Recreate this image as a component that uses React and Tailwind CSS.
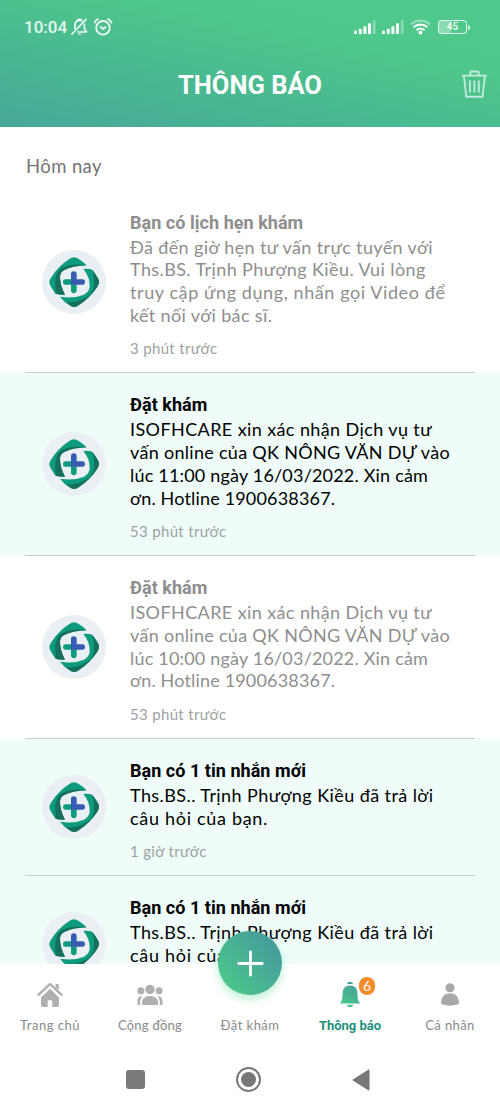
import React, { useState } from 'react';

const notifications = [
    {
        id: 1,
        title: 'Bạn có lịch hẹn khám',
        lines: [
            { text: 'Đã đến giờ hẹn tư vấn trực tuyến với', className: 'tracking-[0.37px]' },
            { text: 'Ths.BS. Trịnh Phượng Kiều. Vui lòng', className: 'tracking-[0.4px]' },
            { text: 'truy cập ứng dụng, nhấn gọi Video để', className: 'tracking-[0.59px]' },
            { text: 'kết nối với bác sĩ.', className: 'tracking-[0.36px]' },
        ],
        time: '3 phút trước',
        read: true,
    },
    {
        id: 2,
        title: 'Đặt khám',
        lines: [
            { text: 'ISOFHCARE xin xác nhận Dịch vụ tư', className: 'tracking-[0.4px]' },
            { text: 'vấn online của QK NÔNG VĂN DỰ vào', className: 'tracking-[0.3px]' },
            { text: 'lúc 11:00 ngày 16/03/2022. Xin cảm', className: 'tracking-[0.19px]' },
            { text: 'ơn. Hotline 1900638367.', className: 'tracking-[0.17px]' },
        ],
        time: '53 phút trước',
        read: false,
    },
    {
        id: 3,
        title: 'Đặt khám',
        lines: [
            { text: 'ISOFHCARE xin xác nhận Dịch vụ tư', className: 'tracking-[0.4px]' },
            { text: 'vấn online của QK NÔNG VĂN DỰ vào', className: 'tracking-[0.3px]' },
            { text: 'lúc 10:00 ngày 16/03/2022. Xin cảm', className: 'tracking-[0.19px]' },
            { text: 'ơn. Hotline 1900638367.', className: 'tracking-[0.17px]' },
        ],
        time: '53 phút trước',
        read: true,
    },
    {
        id: 4,
        title: 'Bạn có 1 tin nhắn mới',
        lines: [
            { text: 'Ths.BS.. Trịnh Phượng Kiều đã trả lời', className: 'tracking-[0.42px]' },
            { text: 'câu hỏi của bạn.', className: 'tracking-[0.7px]' },
        ],
        time: '1 giờ trước',
        read: false,
    },
    {
        id: 5,
        title: 'Bạn có 1 tin nhắn mới',
        lines: [
            { text: 'Ths.BS.. Trịnh Phượng Kiều đã trả lời', className: 'tracking-[0.42px]' },
            { text: 'câu hỏi của bạn.', className: 'tracking-[0.7px]' },
        ],
        time: '',
        read: false,
    },
];

const SignalIcon = () => (
    <svg width="22" height="14" viewBox="0 0 22 14" fill="#fff" fillOpacity="0.95">
        <rect x="0" y="10.6" width="3" height="3.4" rx="1" />
        <rect x="4.8" y="8.7" width="3" height="5.3" rx="0.6" />
        <rect x="9.4" y="6.3" width="3" height="7.7" rx="0.6" />
        <rect x="14" y="3.2" width="3" height="10.8" rx="0.6" />
        <rect x="18.8" y="0.2" width="2.8" height="13.8" rx="0.6" fillOpacity="0.35" />
    </svg>
);

const StatusBar = () => (
    <div className="flex h-[54px] items-center pl-[24px] pr-[30px]">
        <span className="w-[46px] whitespace-nowrap text-[17px] font-medium leading-none text-white/85">10:04</span>
        <svg className="ml-[1px]" width="18" height="18" viewBox="0 0 18 18" fill="none" stroke="#fff" strokeOpacity="0.9" strokeWidth="1.7">
            <path d="M3.5 11.2 4 10V7c0-2.6 1.8-4.5 4.7-4.8 1 0 1.900.3 2.700.8M13.400 5.600V10.300l2 3.700H6.300" strokeLinejoin="round" />
            <path d="M7.200 1.300h2.900M1 16 15 1.300" strokeLinecap="round" />
            <path d="M6.400 15.700a2.500 2 0 0 0 4.500 0z" fill="#fff" stroke="none" />
        </svg>
        <svg className="ml-[4px]" width="20" height="18" viewBox="0 0 20 18" fill="none" stroke="#fff" strokeOpacity="0.9" strokeWidth="1.8" strokeLinecap="round">
            <circle cx="10" cy="9.8" r="6.8" />
            <path d="M1.600 4.600C2.200 3 3.400 1.800 5 1.200M18.400 4.600C17.800 3 16.600 1.800 15 1.200M7.600 8.800l2.400 2.200 2.700-2" />
        </svg>
        <div className="ml-auto flex items-center">
            <SignalIcon />
            <span className="w-[6px]" />
            <SignalIcon />
            <svg className="ml-[6px]" width="21" height="16" viewBox="0 0 21 16" fill="none" stroke="#fff" strokeOpacity="0.95" strokeWidth="2.2">
                <path d="M0.900 5.400C6.200 0.300 14.800 0.300 20.100 5.400" strokeOpacity="0.4" />
                <path d="M3.500 8.300C7.400 4.700 13.600 4.700 17.500 8.300M6.500 11.200c2.300-2.100 5.700-2.100 8 0" />
                <circle cx="10.5" cy="13.6" r="2" fill="#fff" stroke="none" />
            </svg>
            <div className="ml-[7px] flex h-[14px] w-[29px] items-center justify-center rounded-[4px] border-[1.5px] border-white/80 bg-linear-to-r from-white/35 from-45% to-transparent to-45% text-[10px] font-medium leading-none text-white">
                45
            </div>
            <div className="ml-px h-[5px] w-[2px] rounded-r bg-white/80" />
        </div>
    </div>
);

const Header = ({ onClear }) => (
    <header className="h-[127px] shrink-0 bg-[linear-gradient(12deg,#46a898_0%,#4dc78b_68%,#4fc98c_100%)] font-[Roboto,sans-serif]">
        <StatusBar />
        <div className="grid h-[62px] grid-cols-[60px_1fr_60px] items-center">
            <span />
            <h1 className="pt-[2px] text-center text-[25.5px] font-bold leading-none text-white">THÔNG BÁO</h1>
            <button onClick={onClear} className="-mt-[2px] flex justify-end pr-[12px]" aria-label="Xóa">
                <svg width="27" height="28" viewBox="0 0 27 28" fill="none" stroke="#fff" strokeOpacity="0.65" strokeWidth="1.9" strokeLinejoin="round">
                    <path d="M0.800 5.600h25M9.300 5.400V2.900c0-.8.600-1.400 1.400-1.400h5.600c.8 0 1.400.6 1.400 1.400v2.500M3 6l2.200 20.800h16.300L23.900 6" />
                    <path d="M9 10.500v12M13.400 10.500v12M17.800 10.500v12" />
                </svg>
            </button>
        </div>
    </header>
);

const Logo = () => (
    <svg className="shrink-0" width="64" height="64" viewBox="0 0 192 192">
        <circle cx="96" cy="96" r="96" fill="#e9eff2" />
        {/* upper left band */}
        <path d="M134 46Q125 36 110 27Q96 16 82 27Q48 49 27 83Q17 96 27 110L40 131Q53 135 69 134Q53 104 54 78Q56 65 67 60Q94 47 134 46Z" fill="#0c9b7c" />
        <path d="M134 46Q93 38 60 54Q44 63 40 90Q38 113 42 131Q53 135 69 134Q53 104 54 78Q56 65 67 60Q94 47 134 46Z" fill="#156f5b" />
        {/* lower right band */}
        <path d="M124 57Q142 54 151 60Q159 69 166 82Q176 96 166 110Q145 142 111 165Q96 177 82 165Q66 156 54 140Q95 147 126 134Q139 128 143 112Q145 82 124 57Z" fill="#0c9b7c" />
        <path d="M151 60Q159 69 166 82Q176 96 166 110Q145 142 111 165Q96 177 82 165L73 158Q114 158 144 134Q165 112 151 60Z" fill="#156f5b" />
        {/* cross */}
        <path d="M88 88H71a8 8 0 0 0 0 16H88Z" fill="#0c9b7c" />
        <path d="M87 103h17v18a8.5 8.5 0 0 1-17 0Z" fill="#0c9b7c" />
        <path d="M87 104V72a8.5 8.5 0 0 1 17 0V88H121a8 8 0 0 1 0 16Z" fill="#365bb3" />
    </svg>
);

const NotificationItem = ({ item, onRead }) => (
    <li
        onClick={() => onRead(item.id)}
        className={`shrink-0 px-[25px] ${item.read ? 'bg-white text-[#8e8e8e]' : 'bg-[#effcfa] text-black'}`}
    >
        <div className="flex items-center border-b border-[#c5d1cf] pl-[17px]">
            <Logo />
            <div className="ml-[24px] pb-[14.3px] pt-[20px]">
                <h2 className="h-[25px] whitespace-nowrap font-[Roboto,sans-serif] text-[18px] font-bold leading-[24px] tracking-[0.04px]">{item.title}</h2>
                {item.lines.map((line) => (
                    <p key={line.text} className={`whitespace-nowrap text-[18px] leading-[22.75px] ${line.className}`}>
                        {line.text}
                    </p>
                ))}
                <p className="mt-[11.5px] h-[20px] text-[15px] leading-[20px] tracking-[0.33px] text-[#9da2a1]">{item.time}</p>
            </div>
        </div>
    </li>
);

const HomeIcon = () => (
    <svg width="26" height="26" viewBox="0 0 26 26" fill="#b0b0b0">
        <path d="M1.500 12.800 12 2.800Q13 1.900 14 2.800L24.500 12.800" fill="none" stroke="#b0b0b0" strokeWidth="2.4" strokeLinecap="round" />
        <path d="M18.500 2.800q0-.8.8-.8h1.700q.8 0 .8.8v5.400l-3.300-3.100z" />
        <path d="M13 6.800 4 15.400V23q0 2 2 2h4.700v-5.700q0-1 1-1h2.600q1 0 1 1V25H20q2 0 2-2v-7.600z" />
    </svg>
);

const CommunityIcon = () => (
    <svg width="26" height="22" viewBox="0 0 26 22" fill="#b0b0b0">
        <circle cx="13" cy="5.500" r="4.700" />
        <circle cx="3.900" cy="6.700" r="3.500" />
        <circle cx="22.100" cy="6.700" r="3.500" />
        <path d="M5 21v-2.500c0-4 3.300-6.500 8-6.500s8 2.500 8 6.500V21zM.5 21v-3.500C.5 14 2 12.200 5.500 12.200 4 14 3.200 15.500 3.200 18v3zM25.500 21v-3.500c0-3.500-1.500-5.300-5-5.300 1.500 1.800 2.300 3.300 2.300 5.800v3z" />
    </svg>
);

const BellIcon = () => (
    <svg width="22" height="27" viewBox="0 0 22 27" fill="url(#bell)">
        <defs>
            <linearGradient id="bell" x1="0.7" y1="0" x2="0.3" y2="1">
                <stop offset="0" stopColor="#449e9b" />
                <stop offset="1" stopColor="#4dc78b" />
            </linearGradient>
        </defs>
        <path d="M8 3.200C8.400 1.500 9.500.8 11 .8s2.600.7 3 2.400Q11 2.600 8 3.200zM11 4.500c4.500 0 7.400 3 7.400 7.500 0 4.800.4 7.600 2.600 10.400H1c2.200-2.800 2.600-5.600 2.600-10.400C3.600 7.500 6.500 4.500 11 4.500zM7.800 23.800h6.400c-.5 1.800-1.600 2.500-3.200 2.500s-2.700-.7-3.200-2.500z" />
    </svg>
);

const UserIcon = () => (
    <svg width="18" height="23" viewBox="0 0 18 23" fill="#a8a8a8">
        <circle cx="9" cy="4.800" r="4.500" />
        <path d="M0 19.500C.3 13.500 4 10.300 9 10.300s8.700 3.200 9 9.200c0 1.200-.4 1.700-1.500 2.100-4.500 1.500-10.500 1.500-15 0C.4 21.200 0 20.700 0 19.500z" />
    </svg>
);

const tabs = [
    { id: 'home', label: 'Trang chủ', icon: <HomeIcon />, className: 'tracking-[0.5px]' },
    { id: 'community', label: 'Cộng đồng', icon: <CommunityIcon />, className: 'tracking-[0.25px]' },
    { id: 'booking', label: 'Đặt khám', icon: null, className: 'tracking-[0.45px]' },
    { id: 'notification', label: 'Thông báo', icon: <BellIcon />, badge: 6, className: 'tracking-[0px]' },
    { id: 'profile', label: 'Cá nhân', icon: <UserIcon />, className: 'tracking-[0.4px]' },
];

const TabBar = ({ active, onChange }) => (
    <nav className="relative grid h-[84px] shrink-0 grid-cols-5 bg-white">
        {tabs.map((tab) => (
            <button key={tab.id} onClick={() => onChange(tab.id)} className="flex flex-col items-center">
                <span className="relative mt-[16px] flex h-[29px] items-center justify-center">
                    {tab.icon}
                    {tab.badge && (
                        <span className="absolute -top-[3px] left-[20px] flex h-[18px] w-[16px] items-center justify-center rounded-full bg-[#f68b28] text-[14px] leading-none text-white">
                            {tab.badge}
                        </span>
                    )}
                </span>
                <span
                    className={`mt-[7px] whitespace-nowrap leading-[18px] ${tab.className} ${tab.id === active
                            ? 'pt-px font-[Roboto,sans-serif] text-[13px] font-bold text-[#20907c]'
                            : 'text-[13px] text-[#8a8a8a]'
                        }`}
                >
                    {tab.label}
                </span>
            </button>
        ))}
        {/* Floating booking button */}
        <button
            onClick={() => onChange('booking')}
            aria-label="Đặt khám"
            className="absolute -top-[33px] left-[218px] flex size-[64px] items-center justify-center rounded-full bg-[linear-gradient(50deg,#4dc78b_10%,#43979d_95%)] shadow-[0_4px_8px_rgba(77,220,140,0.4)]"
        >
            <svg width="27" height="27" viewBox="0 0 27 27" stroke="#fff" strokeWidth="2.8" strokeLinecap="round">
                <path d="M13.500 1.800v23.400M1.800 13.500h23.400" />
            </svg>
        </button>
    </nav>
);

const SystemBar = () => (
    <div className="flex h-[63px] shrink-0 items-center bg-white pl-[126px]">
        <span className="size-[19px] rounded-[3px] bg-[#7a7a7a]" />
        <span className="ml-[91px] flex size-[25px] items-center justify-center rounded-full border-2 border-[#777]">
            <span className="size-[15px] rounded-full bg-[#777]" />
        </span>
        <svg className="ml-[91px]" width="18" height="22" viewBox="0 0 18 22" fill="#777" stroke="#777" strokeLinejoin="round">
            <path d="M.8 11 17 .8v20.400z" />
        </svg>
    </div>
);

const App = () => {
    const [items, setItems] = useState(notifications);
    const [active, setActive] = useState('notification');

    const handleRead = (id) => {
        setItems(prev => prev.map(item => (item.id === id ? { ...item, read: true } : item)));
    };

    return (
        <div className="flex h-[1111px] w-[500px] flex-col overflow-hidden bg-white font-[Lato,sans-serif]">
            <Header onClear={() => setItems([])} />
            <main className="flex min-h-0 flex-1 flex-col overflow-hidden">
                <div className="h-[63.65px] shrink-0 pl-[26px] pt-[27px] text-[18.5px] leading-[24px] tracking-[0.4px] text-[#747474]">Hôm nay</div>
                <ul className="flex flex-col">
                    {items.map((item) => (
                        <NotificationItem key={item.id} item={item} onRead={handleRead} />
                    ))}
                </ul>
            </main>
            <TabBar active={active} onChange={setActive} />
            <SystemBar />
        </div>
    );
};

export default App;
